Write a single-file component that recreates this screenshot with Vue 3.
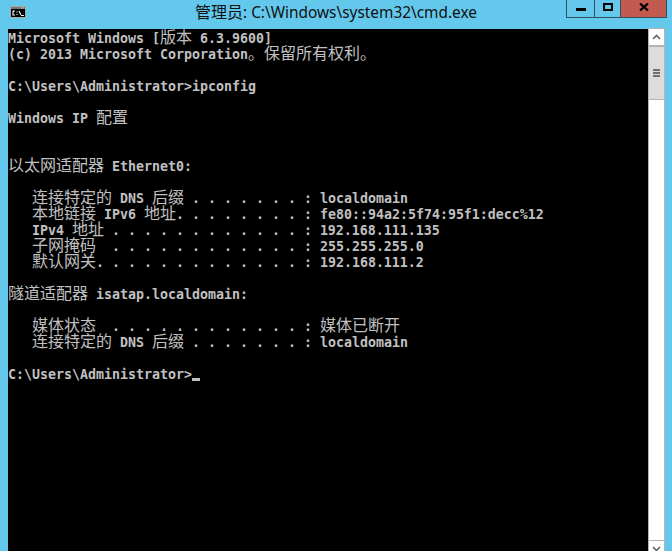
<script setup>
const raw = [
  'Microsoft Windows [版本 6.3.9600]',
  '(c) 2013 Microsoft Corporation。保留所有权利。',
  '',
  'C:\\Users\\Administrator>ipconfig',
  '',
  'Windows IP 配置',
  '',
  '',
  '以太网适配器 Ethernet0:',
  '',
  '   连接特定的 DNS 后缀 . . . . . . . : localdomain',
  '   本地链接 IPv6 地址. . . . . . . . : fe80::94a2:5f74:95f1:decc%12',
  '   IPv4 地址 . . . . . . . . . . . . : 192.168.111.135',
  '   子网掩码  . . . . . . . . . . . . : 255.255.255.0',
  '   默认网关. . . . . . . . . . . . . : 192.168.111.2',
  '',
  '隧道适配器 isatap.localdomain:',
  '',
  '   媒体状态  . . . . . . . . . . . . : 媒体已断开',
  '   连接特定的 DNS 后缀 . . . . . . . : localdomain',
  '',
]
const lines = raw.map((text) =>
  (text.match(/[\u3000-\u9fff]+|[^\u3000-\u9fff]+/g) || []).map((t) => ({
    t,
    cjk: /[\u3000-\u9fff]/.test(t),
  }))
)
</script>

<template>
  <div class="window">
    <header class="titlebar">
      <svg class="app-icon" width="16" height="12" viewBox="0 0 16 12">
        <rect x="0.5" y="0.5" width="15" height="11" fill="#000" stroke="#a8a8a8" />
        <rect x="1" y="1" width="14" height="2" fill="#777" />
        <path d="M11 2h1M13 2h1" stroke="#ddd" fill="none" />
        <path d="M5 5H3V9H5M7 5.5v1M7 8v1M9 5l2 4M11 9.5h3" stroke="#fff" stroke-width="1.1" fill="none" />
      </svg>
      <div class="title"><span class="title-cjk">管理员</span>: C:\Windows\system32\cmd.exe</div>
      <div class="controls">
        <div class="ctl min"><span class="min-bar"></span></div>
        <div class="ctl max"><span class="max-box"></span></div>
        <div class="ctl close">
          <svg width="10" height="8" viewBox="0 0 10 8">
            <path d="M1 0.5 L9 7.5 M9 0.5 L1 7.5" stroke="#000" stroke-width="2.2" fill="none" />
          </svg>
        </div>
      </div>
    </header>
    <main class="body">
      <div class="console">
        <div v-for="(line, i) in lines" :key="i" class="line">
          <span v-for="(seg, j) in line" :key="j" :class="{ cjk: seg.cjk }">{{ seg.t }}</span>
        </div>
        <div class="line">C:\Users\Administrator&gt;<span class="cursor"></span></div>
      </div>
      <aside class="scrollbar">
        <div class="arrow up">
          <svg width="9" height="6" viewBox="0 0 9 6">
            <path d="M1 5 L4.5 1.5 L8 5" stroke="#606060" stroke-width="1.6" fill="none" />
          </svg>
        </div>
        <div class="thumb">
          <span></span><span></span><span></span>
        </div>
        <div class="track"></div>
        <div class="arrow down">
          <svg width="9" height="6" viewBox="0 0 9 6">
            <path d="M1 1 L4.5 4.5 L8 1" stroke="#606060" stroke-width="1.6" fill="none" />
          </svg>
        </div>
      </aside>
    </main>
  </div>
</template>

<style>
html, body { margin: 0; background: #63c8ec; }
</style>

<style scoped>
.window {
  width: 672px;
  height: 551px;
  overflow: hidden;
  background: #63c8ec;
  display: flex;
  flex-direction: column;
}
.titlebar {
  height: 29px;
  flex: none;
  display: flex;
  align-items: flex-start;
  position: relative;
}
.app-icon {
  margin: 6px 0 0 10px;
  flex: none;
}
.title {
  margin: 3px 0 0 169px;
  font: 15.4px/20px "Noto Sans", "Noto Sans CJK SC", sans-serif;
  color: #111;
  white-space: nowrap;
}
.title-cjk {
  font-size: 16px;
  line-height: 0;
}
.controls {
  position: absolute;
  top: 0;
  left: 566px;
  width: 101px;
  height: 18px;
  display: flex;
  box-sizing: border-box;
  border: 1px solid #33505e;
  border-top: none;
}
.ctl {
  display: flex;
  align-items: flex-start;
  justify-content: center;
  box-sizing: border-box;
}
.min { width: 28px; border-right: 1px solid #33505e; }
.max { width: 26px; border-right: 1px solid #33505e; }
.close { flex: 1; background: #c35a50; padding-top: 3px; }
.min-bar { width: 10px; height: 3px; background: #000; margin-top: 8px; }
.max-box {
  width: 10px;
  height: 8px;
  box-sizing: border-box;
  border: 2px solid #000;
  margin-top: 3px;
}
.body {
  height: 528px;
  flex: none;
  display: flex;
  padding: 0 7px 0 8px;
}
.console {
  flex: 1;
  background: #000;
  padding-top: 2px;
  color: #c0c0c0;
  font: bold 13.29px/16px "DejaVu Sans Mono", monospace;
  white-space: pre;
  overflow: hidden;
}
.line {
  height: 16px;
  line-height: 16px;
}
.cjk {
  font: normal 16px/0 "Noto Sans CJK SC", sans-serif;
}
.cursor {
  display: inline-block;
  width: 8px;
  height: 3px;
  background: #c0c0c0;
  vertical-align: -2px;
}
.scrollbar {
  width: 17px;
  flex: none;
  margin-top: -1px;
  display: flex;
  flex-direction: column;
  box-sizing: border-box;
  background: #fff;
  border-left: 1px solid #b4b4b4;
  border-right: 1px solid #b4b4b4;
  border-top: 1px solid #b4b4b4;
}
.arrow {
  height: 17px;
  flex: none;
  box-sizing: border-box;
  display: flex;
  align-items: center;
  justify-content: center;
  background: #fff;
}
.arrow.up { border-bottom: 1px solid #b4b4b4; }
.arrow.down { border-top: 1px solid #b4b4b4; }
.thumb {
  height: 54px;
  flex: none;
  box-sizing: border-box;
  background: #dcdcdc;
  border-top: 1px solid #b4b4b4;
  border-bottom: 1px solid #b4b4b4;
  display: flex;
  flex-direction: column;
  align-items: center;
  justify-content: center;
  gap: 1px;
}
.thumb span {
  width: 7px;
  height: 2px;
  background: #707070;
}
.track { flex: 1; background: #fff; }
</style>
